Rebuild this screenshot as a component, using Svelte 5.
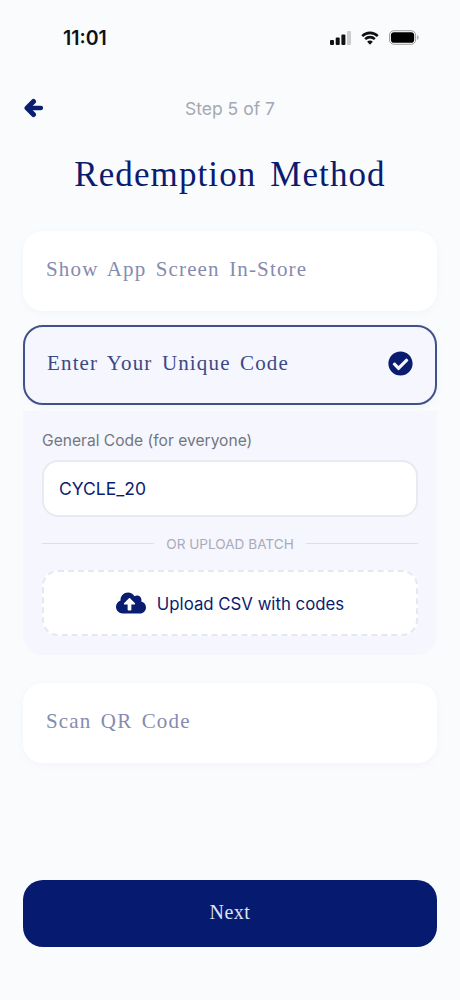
<script>
  let code = "CYCLE_20";
  let selected = "code";

  const methods = [
    { id: "screen", label: "Show App Screen In-Store" },
    { id: "code", label: "Enter Your Unique Code" },
    { id: "qr", label: "Scan QR Code" },
  ];
</script>

<main>
  <div class="status">
    <span class="time">11:01</span>
    <div class="status-icons">
      <svg width="21" height="14" viewBox="0 0 21 14">
        <rect x="0" y="9" width="4" height="5" rx="1" fill="#111" />
        <rect x="5.700" y="6.500" width="4" height="7.500" rx="1" fill="#111" />
        <rect x="11.400" y="3.500" width="4" height="10.500" rx="1" fill="#111" />
        <rect x="17" y="0" width="4" height="14" rx="1" fill="#ccc" />
      </svg>
      <svg width="18" height="14" viewBox="0 0 19 14">
        <path d="M1.300 5a11.600 11.600 0 0 1 16.400 0" fill="none" stroke="#111" stroke-width="2.700" />
        <path d="M4.400 8.200a7.200 7.200 0 0 1 10.200 0" fill="none" stroke="#111" stroke-width="2.700" />
        <path d="M9.500 14l-3-3.100a4.200 4.200 0 0 1 6 0z" fill="#111" />
      </svg>
      <svg width="30" height="15" viewBox="0 0 31 15">
        <rect x="0.500" y="0.500" width="27" height="14" rx="4.500" fill="none" stroke="#999" />
        <rect x="2" y="2" width="24" height="11" rx="3.200" fill="#000" />
        <path d="M29 5.200c1 .3 1.600 1.200 1.600 2.300s-.6 2-1.600 2.300z" fill="#aaa" />
      </svg>
    </div>
  </div>

  <header class="nav">
    <button class="back" aria-label="Back">
      <svg width="19" height="20" viewBox="0 0 19 20">
        <path d="M9.500 3.500L3 10l6.500 6.500" fill="none" stroke="#0a1f70" stroke-width="5" stroke-linecap="round" stroke-linejoin="round" />
        <path d="M4 10h12.800" fill="none" stroke="#0a1f70" stroke-width="4.600" stroke-linecap="round" />
      </svg>
    </button>
    <span class="step">Step 5 of 7</span>
  </header>

  <h1>Redemption Method</h1>

  <div class="options">
    {#each methods as m}
      <div class="option" class:active={selected === m.id}>
        <span>{m.label}</span>
        {#if selected === m.id}
          <svg width="25" height="25" viewBox="0 0 512 512">
            <path fill="#0a1c70" d="M504 256c0 136.967-111.033 248-248 248S8 392.967 8 256 119.033 8 256 8s248 111.033 248 248zM227.314 387.314l184-184c6.248-6.248 6.248-16.379 0-22.627l-22.627-22.627c-6.248-6.249-16.379-6.249-22.628 0L216 308.118l-70.059-70.059c-6.248-6.248-16.379-6.248-22.628 0l-22.627 22.627c-6.248 6.248-6.248 16.379 0 22.627l104 104c6.249 6.250 16.379 6.250 22.628.001z" />
          </svg>
        {/if}
      </div>

      {#if m.id === "code" && selected === "code"}
        <div class="panel">
          <label for="general-code">General Code (for everyone)</label>
          <input id="general-code" bind:value={code} />
          <div class="divider"><span>OR UPLOAD BATCH</span></div>
          <button class="upload">
            <svg width="30" height="24" viewBox="0 0 640 512">
              <path fill="#0a1c70" d="M537.600 226.600c4.100-10.700 6.400-22.400 6.400-34.600 0-53-43-96-96-96-19.700 0-38.100 6-53.300 16.200C367 64.200 315.300 32 256 32c-88.400 0-160 71.600-160 160 0 2.700.1 5.400.2 8.100C40.200 219.800 0 273.200 0 336c0 79.500 64.500 144 144 144h368c70.700 0 128-57.300 128-128 0-61.900-44-113.600-102.400-125.400zM393.400 288H328v112c0 8.800-7.200 16-16 16h-48c-8.800 0-16-7.200-16-16V288h-65.400c-14.300 0-21.400-17.200-11.300-27.300l105.400-105.400c6.200-6.200 16.400-6.200 22.600 0l105.400 105.400c10.100 10.100 2.900 27.300-11.300 27.300z" />
            </svg>
            <span class="upload-label">Upload CSV with codes</span>
          </button>
        </div>
      {/if}
    {/each}
  </div>

  <button class="next">Next</button>
</main>

<style>
  :global(body) {
    margin: 0;
    background: #fafbfd;
  }

  main {
    height: 1000px;
    box-sizing: border-box;
    padding: 0 23px 53px;
    display: flex;
    flex-direction: column;
    font-family: Inter, "Noto Sans", sans-serif;
    background: #fafbfd;
    color: #0a1c70;
  }

  .status {
    height: 75px;
    margin: 0 -23px;
    padding: 0 41px 0 63px;
    display: flex;
    justify-content: space-between;
    align-items: center;
  }

  .time {
    font-size: 19.500px;
    font-weight: 600;
    color: #111;
  }

  .status-icons {
    display: flex;
    align-items: center;
    gap: 10px;
  }

  .nav {
    height: 66px;
    display: grid;
    grid-template-columns: 20px 1fr 20px;
    align-items: center;
  }

  .back {
    padding: 0 0 0 1px;
    border: none;
    background: none;
    display: flex;
  }

  .step {
    text-align: center;
    font-size: 17.500px;
    color: #a4a8b2;
  }

  h1 {
    margin: 0;
    height: 89.500px;
    line-height: 68px;
    text-align: center;
    font-family: "Liberation Serif", serif;
    font-weight: 400;
    font-size: 35px;
    letter-spacing: 1.100px;
    word-spacing: 4px;
  }

  .options {
    display: flex;
    flex-direction: column;
  }

  .option {
    height: 80px;
    box-sizing: border-box;
    padding: 0 23px 3px;
    margin-bottom: 14px;
    border-radius: 20px;
    background: #fff;
    box-shadow: 0 2px 10px rgba(20, 30, 90, 0.03);
    display: flex;
    align-items: center;
    justify-content: space-between;
    font-family: "Liberation Serif", serif;
    font-size: 21px;
    letter-spacing: 1.150px;
    word-spacing: 3px;
    color: #868baf;
  }

  .option.active {
    margin-bottom: 6.500px;
    padding: 0 22px 2px;
    border: 2px solid #41518a;
    background: #f5f6fe;
    color: #3a4986;
  }

  .panel {
    margin-bottom: 28px;
    padding: 19.500px 19px 0;
    height: 244px;
    box-sizing: border-box;
    border-radius: 0 0 20px 20px;
    background: #f5f6fe;
    display: flex;
    flex-direction: column;
  }

  label {
    font-size: 15.600px;
    line-height: 20px;
    color: #73767f;
    margin-bottom: 9px;
  }

  input {
    height: 57px;
    box-sizing: border-box;
    padding: 0 15px;
    border: 2px solid #e8e9f1;
    border-radius: 16px;
    background: #fff;
    font: inherit;
    font-size: 17.500px;
    color: #0a1c70;
  }

  .divider {
    display: flex;
    align-items: center;
    gap: 12px;
    margin: 18px 0 17.500px;
    font-size: 13.600px;
    line-height: 18px;
    color: #a9acb8;
  }

  .divider::before,
  .divider::after {
    content: "";
    flex: 1;
    height: 1px;
    background: #dcdfea;
  }

  .upload {
    height: 66px;
    border: 2px dashed #e6e8ef;
    border-radius: 16px;
    background: #fff;
    display: flex;
    align-items: center;
    justify-content: center;
    gap: 11px;
    font: inherit;
    font-size: 16.800px;
    color: #0a1c70;
  }

  .upload-label {
    padding-top: 2px;
  }

  .next {
    margin-top: auto;
    height: 67px;
    padding: 0 0 3px;
    border: none;
    border-radius: 20px;
    background: #061a70;
    color: #dfe2f2;
    font-family: "Liberation Serif", serif;
    font-size: 20px;
    letter-spacing: 0.500px;
  }
</style>
